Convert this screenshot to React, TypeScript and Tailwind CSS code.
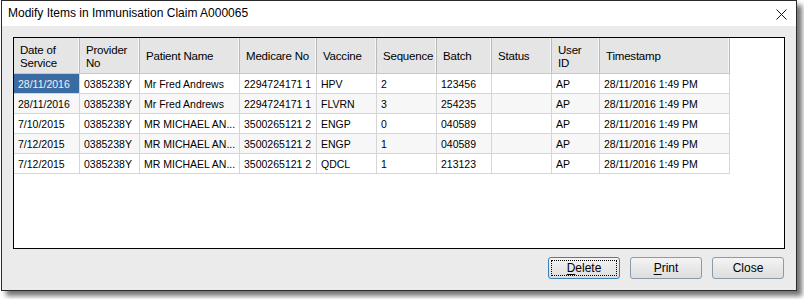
import React from "react";

// Columns of the claim items grid (widths measured from the dialog)
const COLUMNS = [
  { label: ["Date of", "Service"], w: "w-[66px]" },
  { label: ["Provider", "No"], w: "w-[60px]" },
  { label: ["Patient Name"], w: "w-[100px]" },
  { label: ["Medicare No"], w: "w-[77px]" },
  { label: ["Vaccine"], w: "w-[60px]" },
  { label: ["Sequence"], w: "w-[60px]" },
  { label: ["Batch"], w: "w-[55px]" },
  { label: ["Status"], w: "w-[60px]" },
  { label: ["User", "ID"], w: "w-[48px]" },
  { label: ["Timestamp"], w: "w-[130px]" },
];

// the grid shows long names already clipped
const ROWS = [
  ["28/11/2016", "0385238Y", "Mr Fred Andrews", "2294724171 1", "HPV", "2", "123456", "", "AP", "28/11/2016 1:49 PM"],
  ["28/11/2016", "0385238Y", "Mr Fred Andrews", "2294724171 1", "FLVRN", "3", "254235", "", "AP", "28/11/2016 1:49 PM"],
  ["7/10/2015", "0385238Y", "MR MICHAEL AN...", "3500265121 2", "ENGP", "0", "040589", "", "AP", "28/11/2016 1:49 PM"],
  ["7/12/2015", "0385238Y", "MR MICHAEL AN...", "3500265121 2", "ENGP", "1", "040589", "", "AP", "28/11/2016 1:49 PM"],
  ["7/12/2015", "0385238Y", "MR MICHAEL AN...", "3500265121 2", "QDCL", "1", "213123", "", "AP", "28/11/2016 1:49 PM"],
];

const font = { fontFamily: '"Liberation Sans", Arial, sans-serif' };

const DialogButton: React.FC<{ hotkey?: string; rest: string; focused?: boolean }> = ({ hotkey, rest, focused }) => (
  <button
    className={`w-[72px] h-[22px] rounded-[3px] border text-[12px] text-black
      bg-gradient-to-b from-[#f4f4f4] to-[#dddddd]
      ${focused ? "border-[#3c7fb1] p-[2px]" : "border-[#8a99ad] p-[2px]"}`}>
    <span
      className={`flex h-full w-full items-center justify-center ${
        focused ? "border border-dotted border-black" : "border border-transparent"
      }`}>
      {hotkey && <span className="underline underline-offset-2">{hotkey}</span>}
      {rest}
    </span>
  </button>
);

export default function App() {
  return (
    <div className="w-[804px] h-[299px] bg-white" style={font}>
      <div className="ml-[1px] w-[796px] h-[291px] flex flex-col border border-[#2b2b2b] bg-[#ebebeb] shadow-[5px_5px_5px_rgba(0,0,0,0.55)]">
        {/* Title bar */}
        <div className="h-[25px] shrink-0 bg-white flex items-center justify-between pl-[6px] pr-[9px]">
          <span className="text-[12px] text-black -mt-[1px]">Modify Items in Immunisation Claim A000065</span>
          <svg width="11" height="11" viewBox="0 0 11 11" className="mt-[1px]">
            <path d="M0.5 0.5 L10.5 10.5 M10.5 0.5 L0.5 10.5" stroke="#111" strokeWidth="1" />
          </svg>
        </div>

        {/* Body */}
        <div className="flex-1 flex flex-col pt-[11px] pl-[11px] pr-[11px]">
          <div className="h-[212px] w-[772px] border border-black bg-white overflow-hidden">
            {/* header */}
            <div className="flex h-[36px] w-[716px] bg-[#e5e5e5] border-b border-[#c8c8c8]">
              {COLUMNS.map((c) => (
                <div
                  key={c.label.join(" ")}
                  className={`${c.w} shrink-0 flex flex-col justify-center pl-[6px] pt-[2px] border-r border-[#b9b9b9] shadow-[inset_-1px_0_0_#f6f6f6] text-[11.5px] leading-[13px] tracking-[-0.2px] text-black`}>
                  {c.label.map((l) => (
                    <span key={l}>{l}</span>
                  ))}
                </div>
              ))}
            </div>
            {/* rows */}
            {ROWS.map((row, r) => (
              <div
                key={r}
                className={`flex h-[20px] w-[716px] border-b border-[#d6d6d6] ${r % 2 === 1 ? "bg-[#f7f7f7]" : "bg-white"}`}>
                {row.map((cell, i) => {
                  const selected = r === 0 && i === 0;
                  return (
                    <div
                      key={i}
                      className={`${COLUMNS[i].w} shrink-0 flex items-center pl-[4px] pt-[2px] border-r border-[#d6d6d6] text-[10.5px] whitespace-nowrap overflow-hidden ${
                        selected ? "bg-[#3a6ba3] text-[#eef3f8]" : "text-black"
                      }`}>
                      {cell}
                    </div>
                  );
                })}
              </div>
            ))}
          </div>

          {/* Buttons */}
          <div className="flex justify-end gap-[10px] mt-[8px] pr-[1px]">
            <DialogButton hotkey="D" rest="elete" focused />
            <DialogButton hotkey="P" rest="rint" />
            <DialogButton rest="Close" />
          </div>
        </div>
      </div>
    </div>
  );
}
